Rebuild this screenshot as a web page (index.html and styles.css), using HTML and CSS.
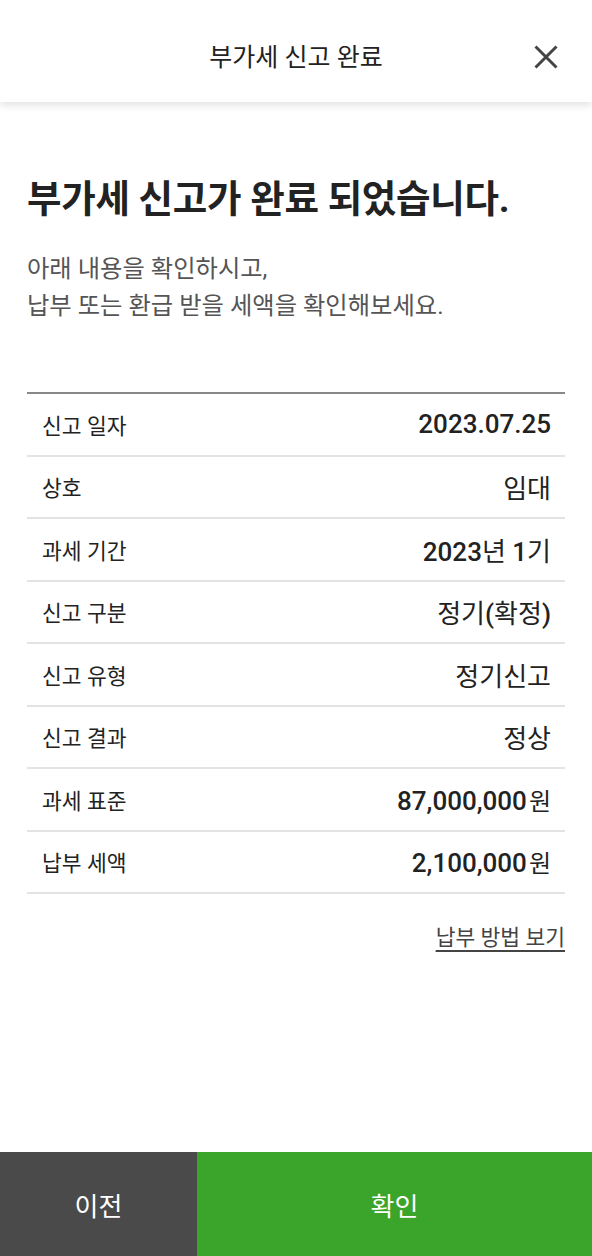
FILE: index.html
```html
<!DOCTYPE html>
<html lang="ko">
<head>
<meta charset="utf-8">
<title>부가세 신고 완료</title>
<link rel="stylesheet" href="styles.css">
</head>
<body>
<div class="page">
  <header class="topbar">
    <h1 class="topbar-title">부가세 신고 완료</h1>
    <button class="close-btn" aria-label="닫기">
      <svg width="24" height="24" viewBox="0 0 24 24"><path d="M1.5 1.5 L22.5 22.5 M22.5 1.5 L1.5 22.5" stroke="#444" stroke-width="3" fill="none"/></svg>
    </button>
  </header>
  <main class="content">
    <h2 class="headline">부가세 신고가 완료 되었습니다.</h2>
    <p class="desc">아래 내용을 확인하시고,<br>납부 또는 환급 받을 세액을 확인해보세요.</p>
    <dl class="summary">
      <div class="row"><dt>신고 일자</dt><dd>2023.07.25</dd></div>
      <div class="row"><dt>상호</dt><dd><span class="ko">임대</span></dd></div>
      <div class="row"><dt>과세 기간</dt><dd>2023<span class="ko">년 </span>1<span class="ko">기</span></dd></div>
      <div class="row"><dt>신고 구분</dt><dd><span class="ko">정기</span>(<span class="ko">확정</span>)</dd></div>
      <div class="row"><dt>신고 유형</dt><dd><span class="ko">정기신고</span></dd></div>
      <div class="row"><dt>신고 결과</dt><dd><span class="ko">정상</span></dd></div>
      <div class="row"><dt>과세 표준</dt><dd>87,000,000<span class="unit">원</span></dd></div>
      <div class="row"><dt>납부 세액</dt><dd>2,100,000<span class="unit">원</span></dd></div>
    </dl>
    <div class="link-wrap"><a class="pay-link" href="#">납부 방법 보기</a></div>
  </main>
  <footer class="actions">
    <button class="btn btn-prev">이전</button>
    <button class="btn btn-ok">확인</button>
  </footer>
</div>
</body>
</html>
```
FILE: styles.css
```css
* { box-sizing: border-box; }
html, body { margin: 0; padding: 0; }
body {
  font-family: Roboto, "Noto Sans CJK KR", "Noto Sans", sans-serif;
  color: #222;
  background: #fff;
}
.page {
  width: 592px;
  height: 1256px;
  display: flex;
  flex-direction: column;
  overflow: hidden;
}
.topbar {
  height: 102px;
  flex: none;
  display: flex;
  align-items: center;
  justify-content: center;
  position: relative;
  background: #fff;
  box-shadow: 0 3px 8px rgba(0,0,0,0.12);
  z-index: 1;
}
.topbar-title {
  margin: 0;
  font-size: 25px;
  font-weight: 400;
  line-height: 36px;
  color: #222;
  padding-top: 14px;
}
.close-btn {
  position: absolute;
  right: 34px;
  top: 45px;
  width: 24px;
  height: 24px;
  padding: 0;
  border: 0;
  background: none;
  display: block;
}
.close-btn svg { display: block; }
.content {
  flex: 1;
  padding: 0 27px;
}
.headline {
  margin: 71px 0 0;
  font-size: 37.5px;
  font-weight: 700;
  line-height: 52px;
  color: #222;
  letter-spacing: -0.3px;
}
.desc {
  margin: 25px 0 0;
  font-size: 24.3px;
  line-height: 37px;
  color: #555;
}
.summary {
  margin: 68px 0 0;
  border-top: 2px solid #888;
}
.row {
  display: flex;
  justify-content: space-between;
  align-items: center;
  height: 62.5px;
  padding: 0 14px 0 15px;
  border-bottom: 2px solid #e3e3e3;
}
.row dt {
  font-size: 21.5px;
  color: #222;
}
.row dd {
  margin: 0;
  font-size: 26px;
  font-weight: 500;
  color: #222;
}
.ko { font-weight: 400; }
.unit {
  font-size: 24px;
  font-weight: 400;
  margin-left: 2px;
}
.link-wrap {
  display: flex;
  justify-content: flex-end;
  margin-top: 26px;
}
.pay-link {
  font-size: 21.5px;
  color: #444;
  text-decoration: underline;
  text-underline-offset: 5px;
}
.actions {
  flex: none;
  height: 104px;
  display: flex;
}
.btn {
  border: 0;
  margin: 0;
  font-family: inherit;
  font-size: 26px;
  color: #fff;
  height: 100%;
}
.btn-prev { width: 197px; background: #4a4a4a; }
.btn-ok { flex: 1; background: #3aa52a; }
```
